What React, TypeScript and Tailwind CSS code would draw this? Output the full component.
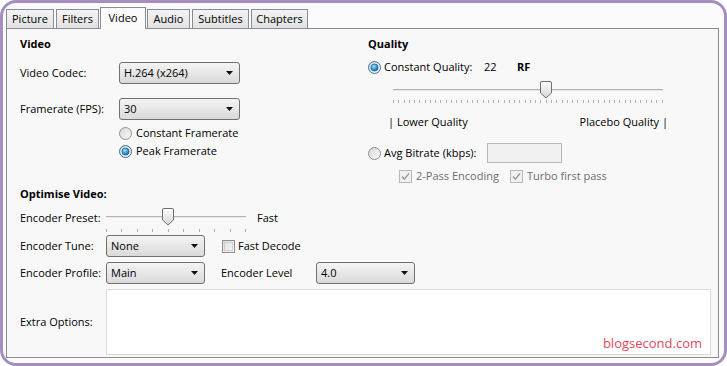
import React from 'react'

// HandBrake style "Video" tab

const TABS = [
  { label: 'Picture', w: 'w-[48px]', ml: 'ml-0' },
  { label: 'Filters', w: 'w-[43px]', ml: 'ml-[2px]' },
  { label: 'Video', w: 'w-[46px]', ml: 'ml-[1px]', active: true },
  { label: 'Audio', w: 'w-[43px]', ml: 'ml-[1px]' },
  { label: 'Subtitles', w: 'w-[57px]', ml: 'ml-[2px]' },
  { label: 'Chapters', w: 'w-[57px]', ml: 'ml-[2px]' },
]

function Select({ value, width }: { value: string; width: string }) {
  return (
    <div
      className={`${width} h-[22px] flex items-center justify-between pl-[4px] pr-[6px] border border-[#707070] rounded-[3px] bg-gradient-to-b from-[#f4f4f4] to-[#dadada]`}
    >
      <span className="leading-none -mt-[2px]">{value}</span>
      <svg width="7" height="4" viewBox="0 0 7 4">
        <polygon points="0,0 7,0 3.5,4" fill="#111" />
      </svg>
    </div>
  )
}

function Radio({ checked }: { checked?: boolean }) {
  return (
    <svg width="13" height="13" viewBox="0 0 13 13" className="shrink-0">
      <defs>
        <linearGradient id="rOff" x1="0" y1="0" x2="1" y2="1">
          <stop offset="0" stopColor="#d6d6d6" />
          <stop offset="1" stopColor="#fbfbfb" />
        </linearGradient>
        <radialGradient id="rOn" cx="0.4" cy="0.35" r="0.7">
          <stop offset="0" stopColor="#a6e3fb" />
          <stop offset="0.5" stopColor="#3aa3db" />
          <stop offset="1" stopColor="#155d95" />
        </radialGradient>
      </defs>
      <circle cx="6.5" cy="6.5" r="6" fill="url(#rOff)" stroke={checked ? '#3c6e96' : '#8f8f8f'} />
      {checked && <circle cx="6.5" cy="6.5" r="3.6" fill="url(#rOn)" stroke="#1d4f78" strokeWidth="0.6" />}
    </svg>
  )
}

function Checkbox({ checked, disabled }: { checked?: boolean; disabled?: boolean }) {
  return (
    <svg width="13" height="13" viewBox="0 0 13 13" className="shrink-0">
      <defs>
        <linearGradient id="cbOn" x1="0" y1="0" x2="1" y2="1">
          <stop offset="0" stopColor="#dcdcdc" />
          <stop offset="1" stopColor="#fafafa" />
        </linearGradient>
      </defs>
      <rect
        x="0.5"
        y="0.5"
        width="12"
        height="12"
        fill={disabled ? '#f1f1f1' : 'url(#cbOn)'}
        stroke={disabled ? '#b8b8b8' : '#8e8f8f'}
      />
      {!disabled && <rect x="2.5" y="2.5" width="8" height="8" fill="none" stroke="#cfcfcf" />}
      {checked && (
        <path d="M3 6.6 L5.4 9.2 L10 3.4" fill="none" stroke={disabled ? '#9a9a9a' : '#333'} strokeWidth="1.5" />
      )}
    </svg>
  )
}

function Slider({
  width,
  ticks,
  value,
  max,
  trackTop,
  tickTop,
  height,
}: {
  width: number
  ticks: number
  value: number
  max: number
  trackTop: string
  tickTop: string
  height: string
}) {
  const thumbLeft = Math.round(((width - 2) * value) / max) - 5
  return (
    <div className={`relative ${height}`} style={{ width }}>
      <div className={`absolute left-0 right-0 ${trackTop} h-[2px] border-t border-[#b4b4b4] bg-[#e6e6e6]`} />
      <div className={`absolute left-0 right-0 ${tickTop} h-[3px] flex justify-between`}>
        {Array.from({ length: ticks }).map((_, i) => (
          <div key={i} className="w-px h-full bg-[#b0b0b0]" />
        ))}
      </div>
      <svg width="12" height="18" viewBox="0 0 12 18" className="absolute top-0" style={{ left: thumbLeft }}>
        <defs>
          <linearGradient id="thumb" x1="0" y1="0" x2="0" y2="1">
            <stop offset="0" stopColor="#ffffff" />
            <stop offset="1" stopColor="#d4d4d4" />
          </linearGradient>
        </defs>
        <path
          d="M2 0.5 H10 A1.5 1.5 0 0 1 11.5 2 V12 L6 17 L0.5 12 V2 A1.5 1.5 0 0 1 2 0.5 Z"
          fill="url(#thumb)"
          stroke="#6f6f6f"
        />
      </svg>
    </div>
  )
}

export default function App() {
  return (
    <div className="w-[727px] h-[366px] bg-white font-['Open_Sans',sans-serif] text-[11px] text-black">
      <div className="h-full flex flex-col border-[3px] border-[#a48fbf] rounded-[16px] bg-[#fbfbfb] pt-[3px] pl-[3px] pr-[5px] pb-[5px]">
        {/* tabs */}
        <div className="flex items-end h-[22px] shrink-0">
          {TABS.map((t) =>
            t.active ? (
              <div
                key={t.label}
                className={`${t.w} ${t.ml} h-[22px] -mb-px z-10 flex items-center justify-center border border-b-0 border-[#898c95] bg-[#fbfbfb] pb-[1px]`}
              >
                {t.label}
              </div>
            ) : (
              <div
                key={t.label}
                className={`${t.w} ${t.ml} h-[19px] flex items-center justify-center border border-b-0 border-[#898c95] bg-gradient-to-b from-[#f3f3f3] to-[#e2e2e2]`}
              >
                {t.label}
              </div>
            )
          )}
        </div>

        {/* panel */}
        <div className="flex-1 flex flex-col border border-[#898c95] bg-[#f8f8f8] pl-[13px] pr-[6px] pt-[7px]">
          <div className="flex items-start">
            {/* left column */}
            <div className="w-[348px] flex flex-col">
              <div className="h-[16px] leading-[16px] font-bold">Video</div>
              <div className="mt-[10px] h-[22px] flex items-center">
                <span className="w-[99px]">Video Codec:</span>
                <Select value="H.264 (x264)" width="w-[121px]" />
              </div>
              <div className="mt-[14px] h-[22px] flex items-center">
                <span className="w-[99px]">Framerate (FPS):</span>
                <Select value="30" width="w-[121px]" />
              </div>
              <div className="mt-[4px] h-[18px] pl-[99px] flex items-center gap-[4px]">
                <Radio />
                <span>Constant Framerate</span>
              </div>
              <div className="h-[18px] pl-[99px] flex items-center gap-[4px]">
                <Radio checked />
                <span>Peak Framerate</span>
              </div>
            </div>

            {/* right column */}
            <div className="flex flex-col">
              <div className="h-[16px] leading-[16px] font-bold">Quality</div>
              <div className="mt-[7px] h-[16px] flex items-center">
                <Radio checked />
                <span className="ml-[3px] w-[100px]">Constant Quality:</span>
                <span className="w-[33px]">22</span>
                <span className="font-bold">RF</span>
              </div>
              <div className="mt-[6px] pl-[25px]">
                <Slider
                  width={270}
                  ticks={52}
                  value={29}
                  max={51}
                  height="h-[23px]"
                  trackTop="top-[8px]"
                  tickTop="top-[19px]"
                />
              </div>
              <div className="mt-[10px] ml-[20px] w-[280px] h-[16px] flex items-center justify-between">
                <span>| Lower Quality</span>
                <span>Placebo Quality |</span>
              </div>
              <div className="mt-[13px] h-[20px] flex items-center">
                <Radio />
                <span className="ml-[3px] w-[103px]">Avg Bitrate (kbps):</span>
                <div className="w-[75px] h-[20px] border border-[#b9b9b9] bg-[#f0f0f0]" />
              </div>
              <div className="mt-[5px] h-[16px] pl-[31px] flex items-center text-[#6d6d6d]">
                <div className="w-[111px] flex items-center gap-[4px]">
                  <Checkbox checked disabled />
                  <span>2-Pass Encoding</span>
                </div>
                <div className="flex items-center gap-[4px]">
                  <Checkbox checked disabled />
                  <span>Turbo first pass</span>
                </div>
              </div>
            </div>
          </div>

          {/* optimise */}
          <div className="mt-[2px] h-[16px] leading-[16px] font-bold">Optimise Video:</div>
          <div className="mt-[6px] h-[24px] flex items-start">
            <span className="w-[86px] leading-[20px]">Encoder Preset:</span>
            <Slider
              width={140}
              ticks={10}
              value={4}
              max={9}
              height="h-[24px]"
              trackTop="top-[8px]"
              tickTop="top-[21px]"
            />
            <span className="ml-[11px] leading-[20px]">Fast</span>
          </div>
          <div className="mt-[3px] h-[22px] flex items-center">
            <span className="w-[86px]">Encoder Tune:</span>
            <Select value="None" width="w-[99px]" />
            <div className="ml-[17px] flex items-center gap-[3px]">
              <Checkbox />
              <span>Fast Decode</span>
            </div>
          </div>
          <div className="mt-[5px] h-[22px] flex items-center">
            <span className="w-[86px]">Encoder Profile:</span>
            <Select value="Main" width="w-[99px]" />
            <span className="ml-[16px] w-[95px]">Encoder Level</span>
            <Select value="4.0" width="w-[99px]" />
          </div>
          <div className="mt-[5px] flex items-center">
            <span className="w-[86px]">Extra Options:</span>
            <div className="relative w-[605px] h-[66px] border border-[#dadada] bg-white">
              <span className="absolute right-[8px] bottom-[1px] text-[13px] text-[#e2485c]">blogsecond.com</span>
            </div>
          </div>
        </div>
      </div>
    </div>
  )
}
